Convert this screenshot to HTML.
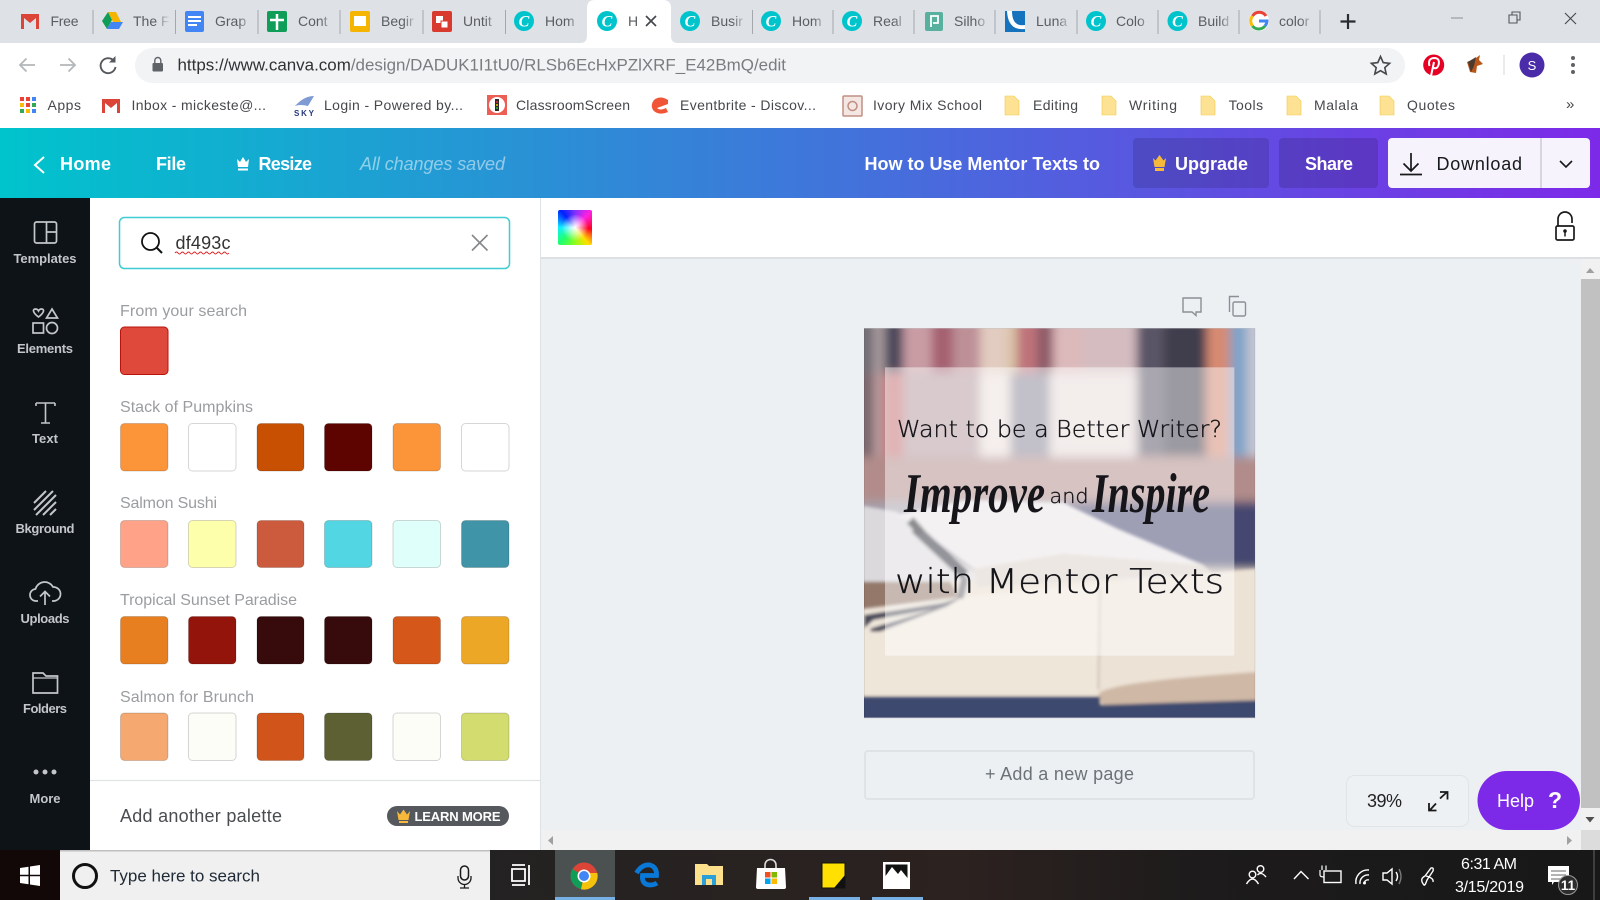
<!DOCTYPE html>
<html lang="en">
<head>
<meta charset="utf-8">
<title>How to Use Mentor Texts to - Canva</title>
<style>
html,body{margin:0;padding:0;width:1600px;height:900px;overflow:hidden;background:#fff}
svg{display:block;position:absolute;left:0;top:0}
text{font-family:"Liberation Sans",sans-serif}
.tab{font-size:14px;fill:#5a5d61}
.bm{font-size:14px;fill:#45484c}
.c{font-family:"Liberation Serif",serif;font-style:italic;font-weight:700;font-size:16px;fill:#fff;text-anchor:middle}
.top{font-size:18px;font-weight:700;fill:#fff}
.side{font-size:13px;font-weight:700;fill:#c4c7c9}
.lab{font-size:16px;fill:#9a9da0}
.sw{stroke:rgba(0,0,0,.16);stroke-width:1}
.ic{fill:none;stroke:#c4c7c9;stroke-width:1.7}
.sep{stroke:#a4a7ab;stroke-width:1}
text.mont{font-family:"DejaVu Sans Light","DejaVu Sans",sans-serif;fill:#141418;stroke:#141418;stroke-width:.35px}
text.script{font-family:"Liberation Serif",serif;font-style:italic;font-weight:700;font-size:56px;fill:#15151a}
</style>
</head>
<body>
<svg width="1600" height="900" viewBox="0 0 1600 900" xmlns="http://www.w3.org/2000/svg">
<defs>
<linearGradient id="bar" x1="0" x2="1" y1="0" y2="0"><stop offset="0" stop-color="#00c4cc"/><stop offset="1" stop-color="#7d2ae8"/></linearGradient>
<linearGradient id="tb" x1="0" x2="1" y1="0" y2="0"><stop offset="0" stop-color="#1a2123"/><stop offset=".6" stop-color="#2c2220"/><stop offset=".75" stop-color="#1d1b1b"/><stop offset="1" stop-color="#181818"/></linearGradient>
<linearGradient id="fade" x1="0" x2="1" y1="0" y2="0"><stop offset="0" stop-color="#dee1e6" stop-opacity="0"/><stop offset=".75" stop-color="#dee1e6"/></linearGradient>
<filter id="b1" x="-5%" y="-5%" width="110%" height="110%"><feGaussianBlur stdDeviation="14"/></filter>
<filter id="b2" x="-20%" y="-20%" width="140%" height="140%"><feGaussianBlur stdDeviation="5"/></filter>
<clipPath id="imgclip"><rect x="42" y="25" width="1173" height="1168"/></clipPath>
</defs>

<!-- Chrome tab strip -->
<g>
<rect width="1600" height="43" fill="#dee1e6"/>
<path d="M580 43 Q587 43 587 36 V8 Q587 0 595 0 H663 Q671 0 671 8 V36 Q671 43 678 43 Z" fill="#fff"/>
<!-- tab icons -->
<path d="M21 14 H39 V29 H36 V18 L30 23 L24 18 V29 H21 Z" fill="#db4437"/>
<path d="M108 12 H116 L122 24 H114 Z" fill="#f4b400"/><path d="M108 12 L112 20 L107 29 L102 21 Z" fill="#0f9d58"/><path d="M107 29 L111 22 H123 L119 29 Z" fill="#4285f4"/>
<rect x="185" y="11" width="19" height="21" rx="2" fill="#4285f4"/><path d="M188 17 H201 M188 21 H201 M188 25 H197" stroke="#fff" stroke-width="2"/>
<rect x="267" y="11" width="20" height="21" rx="2" fill="#0f9d58"/><path d="M277 14 V30 M270 20 H284" stroke="#fff" stroke-width="2.5"/>
<rect x="350" y="11" width="20" height="21" rx="2" fill="#f4b400"/><rect x="354" y="16" width="12" height="10" fill="#fff"/>
<rect x="432" y="11" width="20" height="21" rx="2" fill="#d83b2e"/><rect x="436" y="16" width="7" height="7" fill="#fff"/><rect x="441" y="21" width="7" height="7" fill="#fff" stroke="#d83b2e"/>
<circle cx="524" cy="21" r="10" fill="#00c4cc"/><text x="524" y="26.5" class="c">C</text>
<circle cx="607" cy="21" r="10" fill="#00c4cc"/><text x="607" y="26.5" class="c">C</text>
<circle cx="690" cy="21" r="10" fill="#00c4cc"/><text x="690" y="26.5" class="c">C</text>
<circle cx="771" cy="21" r="10" fill="#00c4cc"/><text x="771" y="26.5" class="c">C</text>
<circle cx="852" cy="21" r="10" fill="#00c4cc"/><text x="852" y="26.5" class="c">C</text>
<rect x="925" y="12" width="18" height="19" rx="2" fill="#58b09f"/><path d="M931 27 V16 H938 V23 H933" fill="none" stroke="#fff" stroke-width="1.8"/>
<rect x="1005" y="11" width="20" height="21" fill="#1573bd"/><path d="M1012 11 Q1012 27 1025 25 V29 Q1008 31 1007 11 Z" fill="#fff"/>
<circle cx="1096" cy="21" r="10" fill="#00c4cc"/><text x="1096" y="26.5" class="c">C</text>
<circle cx="1177.5" cy="21" r="10" fill="#00c4cc"/><text x="1177.5" y="26.5" class="c">C</text>
<circle cx="1259" cy="21" r="10" fill="#fff"/>
<path d="M1266 16 A8 8 0 0 0 1252.5 16" fill="none" stroke="#ea4335" stroke-width="3"/><path d="M1252.5 16 A8 8 0 0 0 1252.5 26" fill="none" stroke="#fbbc05" stroke-width="3"/><path d="M1252.5 26 A8 8 0 0 0 1265 26" fill="none" stroke="#34a853" stroke-width="3"/><path d="M1265 26 A8 8 0 0 0 1267 21 H1259" fill="none" stroke="#4285f4" stroke-width="3"/>
<!-- tab labels -->
<g class="tab">
<text x="50.5" y="26" textLength="28">Free</text>
<text x="133" y="26">The F</text>
<text x="215" y="26">Grap</text>
<text x="298" y="26">Cont</text>
<text x="381" y="26">Begir</text>
<text x="463" y="26">Untit</text>
<text x="545" y="26">Hom</text>
<text x="628" y="26">H</text>
<text x="711" y="26">Busir</text>
<text x="792" y="26">Hom</text>
<text x="873" y="26">Real</text>
<text x="954" y="26">Silho</text>
<text x="1036" y="26">Luna</text>
<text x="1116" y="26">Colo</text>
<text x="1198" y="26">Build</text>
<text x="1279" y="26">color</text>
</g>
<g fill="url(#fade)">
<rect x="155" y="8" width="20" height="28"/><rect x="238" y="8" width="20" height="28"/><rect x="320" y="8" width="20" height="28"/><rect x="403" y="8" width="20" height="28"/><rect x="485" y="8" width="20" height="28"/><rect x="567" y="8" width="20" height="28"/><rect x="732" y="8" width="20" height="28"/><rect x="813" y="8" width="20" height="28"/><rect x="894" y="8" width="20" height="28"/><rect x="975" y="8" width="20" height="28"/><rect x="1057" y="8" width="20" height="28"/><rect x="1138" y="8" width="20" height="28"/><rect x="1219" y="8" width="20" height="28"/><rect x="1300" y="8" width="20" height="28"/>
</g>
<g class="sep"><line x1="93" y1="10" x2="93" y2="34"/><line x1="175.5" y1="10" x2="175.5" y2="34"/><line x1="258" y1="10" x2="258" y2="34"/><line x1="340" y1="10" x2="340" y2="34"/><line x1="423" y1="10" x2="423" y2="34"/><line x1="505.5" y1="10" x2="505.5" y2="34"/><line x1="752.5" y1="10" x2="752.5" y2="34"/><line x1="833" y1="10" x2="833" y2="34"/><line x1="914" y1="10" x2="914" y2="34"/><line x1="995" y1="10" x2="995" y2="34"/><line x1="1077" y1="10" x2="1077" y2="34"/><line x1="1158" y1="10" x2="1158" y2="34"/><line x1="1239" y1="10" x2="1239" y2="34"/><line x1="1320" y1="10" x2="1320" y2="34"/></g>
<path d="M646 16 L656 26 M656 16 L646 26" stroke="#45484c" stroke-width="1.7"/>
<path d="M1348 14 V29 M1340.5 21.5 H1355.5" stroke="#2a2c2f" stroke-width="2.2"/>
<path d="M1451 18 H1463" stroke="#9a9da0" stroke-width="1.2"/>
<path d="M1509 15 H1517 V23 H1509 Z M1512 15 V12 H1520 V20 H1517" fill="none" stroke="#55585c" stroke-width="1.1"/>
<path d="M1565 13 L1576 24 M1576 13 L1565 24" stroke="#44474a" stroke-width="1.1"/>
</g>

<!-- Chrome toolbar -->
<g>
<rect y="43" width="1600" height="85" fill="#fff"/>
<rect x="135" y="48" width="1270" height="35" rx="17.5" fill="#f1f3f4"/>
<path d="M35 65 H20 M26.5 58.5 L20 65 L26.5 71.5" fill="none" stroke="#b4b7ba" stroke-width="1.8"/>
<path d="M60 65 H75 M68.5 58.5 L75 65 L68.5 71.5" fill="none" stroke="#b4b7ba" stroke-width="1.8"/>
<path d="M114 61 A7.5 7.5 0 1 0 115.5 67" fill="none" stroke="#55585c" stroke-width="1.9"/><path d="M115.5 56 V62.5 H109 Z" fill="#55585c"/>
<rect x="152.5" y="63" width="10.5" height="8.5" rx="1" fill="#5f6368"/><path d="M154.8 63 V60.5 A3 3 0 0 1 160.8 60.5 V63" fill="none" stroke="#5f6368" stroke-width="1.4"/>
<text x="177.5" y="70.5" font-size="17" fill="#7a7d80" textLength="608.5" lengthAdjust="spacingAndGlyphs"><tspan fill="#2f3134">https://www.canva.com</tspan>/design/DADUK1I1tU0/RLSb6EcHxPZlXRF_E42BmQ/edit</text>
<path d="M1380.5 56.5 L1383.2 62.6 L1389.6 63.3 L1384.8 67.6 L1386.2 74 L1380.5 70.7 L1374.8 74 L1376.2 67.6 L1371.4 63.3 L1377.8 62.6 Z" fill="none" stroke="#45484c" stroke-width="1.6"/>
<circle cx="1433.7" cy="65" r="10.5" fill="#e60023"/><path d="M1431 76 L1434 62 M1429.5 66 Q1427.5 58.5 1434 58 Q1440 58 1438.7 64.5 Q1437 70 1433 67.5" fill="none" stroke="#fff" stroke-width="2"/>
<path d="M1470 72 L1467 62 L1476 58 L1480 55 L1479 60 L1483 64 L1477 66 L1476 73 Z" fill="#b8571a"/><path d="M1468 62 L1476 57 L1474 66 L1471 72 Z" fill="#4a3a30"/>
<line x1="1504" y1="55" x2="1504" y2="75" stroke="#d5d7da"/>
<circle cx="1532" cy="65" r="12.5" fill="#4a2ba8"/><text x="1532" y="70" font-size="13" fill="#fff" text-anchor="middle">S</text>
<circle cx="1573" cy="58" r="2" fill="#5f6368"/><circle cx="1573" cy="65" r="2" fill="#5f6368"/><circle cx="1573" cy="72" r="2" fill="#5f6368"/>
<!-- bookmarks -->
<g>
<g fill="#ea4335"><rect x="20" y="97" width="4" height="4"/><rect x="26" y="97" width="4" height="4"/></g><rect x="32" y="97" width="4" height="4" fill="#4285f4"/>
<g fill="#fbbc05"><rect x="20" y="103" width="4" height="4"/></g><rect x="26" y="103" width="4" height="4" fill="#ea4335"/><rect x="32" y="103" width="4" height="4" fill="#34a853"/>
<rect x="20" y="109" width="4" height="4" fill="#34a853"/><rect x="26" y="109" width="4" height="4" fill="#fbbc05"/><rect x="32" y="109" width="4" height="4" fill="#4285f4"/>
<path d="M102 99 H120 V113 H117 V103 L111 108 L105 103 V113 H102 Z" fill="#db4437"/>
<path d="M295 106 Q304 96 314 96 L308 106 Q300 104 295 106 Z" fill="#7f9bd4"/><text x="294" y="116" font-size="8" font-weight="700" fill="#24397a" textLength="20">SKY</text>
<rect x="487" y="95" width="20" height="20" fill="#ed5f55"/><circle cx="497" cy="105" r="8" fill="#fff"/><rect x="495" y="99" width="4" height="12" fill="#2b2b2b"/><circle cx="497" cy="102" r="1" fill="#e33"/><circle cx="497" cy="105" r="1" fill="#ec0"/><circle cx="497" cy="108" r="1" fill="#3b3"/>
<path d="M668 100 Q660 95 654 100 Q650 105 653 110 Q658 116 668 112 L666 108 Q660 111 657 108 L668 104 Z" fill="#f05537"/>
<rect x="843" y="96" width="19" height="20" rx="1" fill="#f4e6e2" stroke="#c08f82" stroke-width="1.5"/><circle cx="852.5" cy="106" r="4.5" fill="none" stroke="#c08f82" stroke-width="1.5"/>
<g fill="#fde293" stroke="#f2c94c" stroke-width=".6">
<path d="M1005 96 H1014 L1019 101 V115 H1005 Z"/><path d="M1102 96 H1111 L1116 101 V115 H1102 Z"/><path d="M1201 96 H1210 L1215 101 V115 H1201 Z"/><path d="M1287 96 H1296 L1301 101 V115 H1287 Z"/><path d="M1380 96 H1389 L1394 101 V115 H1380 Z"/>
</g>
<g class="bm">
<text x="47.5" y="110" textLength="33.5">Apps</text>
<text x="131.5" y="110" textLength="134.5">Inbox - mickeste@...</text>
<text x="324" y="110" textLength="139">Login - Powered by...</text>
<text x="516" y="110" textLength="114">ClassroomScreen</text>
<text x="680" y="110" textLength="136">Eventbrite - Discov...</text>
<text x="873" y="110" textLength="109">Ivory Mix School</text>
<text x="1033" y="110" textLength="45">Editing</text>
<text x="1129" y="110" textLength="48">Writing</text>
<text x="1228.6" y="110" textLength="34.5">Tools</text>
<text x="1314" y="110" textLength="44">Malala</text>
<text x="1407" y="110" textLength="48">Quotes</text>
<text x="1566" y="109" font-size="15">»</text>
</g>
</g>
</g>

<!-- Canva top bar -->
<g>
<rect y="128" width="1600" height="70" fill="url(#bar)"/>
<path d="M44 157 L35 165 L44 173" fill="none" stroke="#fff" stroke-width="2"/>
<text x="60" y="170" class="top" textLength="51">Home</text>
<text x="156" y="170" class="top" textLength="30">File</text>
<path d="M237 159 L240 162 L243 157 L246 162 L249 159 L248 167 H238 Z M238 168.5 H248 V170.5 H238 Z" fill="#fff"/>
<text x="258.5" y="170" class="top" textLength="53.5">Resize</text>
<text x="360" y="170" font-size="18" font-style="italic" fill="#fff" fill-opacity=".5" textLength="145">All changes saved</text>
<text x="864.5" y="170" class="top" textLength="235.5">How to Use Mentor Texts to</text>
<rect x="1133" y="138" width="136" height="50" rx="4" fill="#000" fill-opacity=".13"/>
<path d="M1153 158 L1155.5 160.5 L1159.5 155 L1163.5 160.5 L1166 158 L1164.5 167 H1154.5 Z M1155 168 H1164 V171 H1155 Z" fill="#f6b93b"/>
<text x="1175" y="170" class="top" textLength="73">Upgrade</text>
<rect x="1279" y="138" width="99" height="50" rx="4" fill="#000" fill-opacity=".14"/>
<text x="1305" y="170" class="top" textLength="48">Share</text>
<rect x="1388" y="138" width="202" height="50" rx="4" fill="#f6f3fd"/>
<line x1="1541" y1="138" x2="1541" y2="188" stroke="#b9b6c4"/>
<path d="M1411 153 V171 M1403.5 163.5 L1411 171 L1418.5 163.5" fill="none" stroke="#16181a" stroke-width="1.7"/><path d="M1400 174.5 H1422" stroke="#16181a" stroke-width="1.8"/>
<text x="1436.5" y="170" font-size="18" fill="#16181a" textLength="85.5">Download</text>
<path d="M1560 161 L1566 167 L1572 161" fill="none" stroke="#16181a" stroke-width="1.6"/>
</g>

<!-- Sidebar -->
<g>
<rect y="198" width="90" height="652" fill="#0e1318"/>
<g class="ic">
<rect x="34.5" y="222" width="22" height="21" rx="2"/><path d="M46.5 222 V243 M46.5 232 H56.5"/>
<path d="M38.5 317 C33 313 32 309 35.5 309 Q37.5 309 38.5 311 Q39.5 309 41.5 309 C45 309 44 313 38.5 317 Z"/><path d="M52 309 L57.5 318 H46.5 Z"/><rect x="33" y="323" width="10.5" height="10"/><circle cx="52" cy="328" r="5.5"/>
<path d="M36 403 H55 M45.5 403 V423 M41 423 H50 M36 403 V406 M55 403 V406" stroke-width="1.6"/>
<path d="M34 503 L46 491 M34 510 L53 491 M36 515 L56 495 M43 515 L56 502 M50 515 L56 509" stroke-width="2"/>
<path d="M38 601 H36.5 A6 6 0 0 1 35.5 589 A9.5 9.5 0 0 1 53 587 A7 7 0 0 1 54 601 H52"/><path d="M45 605 V592 M40 596.5 L45 591.5 L50 596.5"/>
<path d="M33 693 V673 H43 L46 676 H57.5 V693 Z"/><path d="M33 678 H57.5" stroke-width="1.2"/>
</g>
<circle cx="36" cy="772" r="2.5" fill="#c4c7c9"/><circle cx="45" cy="772" r="2.5" fill="#c4c7c9"/><circle cx="54" cy="772" r="2.5" fill="#c4c7c9"/>
<g class="side" text-anchor="middle">
<text x="45" y="263" textLength="63">Templates</text>
<text x="45" y="353" textLength="56">Elements</text>
<text x="45" y="443" textLength="26">Text</text>
<text x="45" y="533" textLength="59">Bkground</text>
<text x="45" y="623" textLength="49">Uploads</text>
<text x="45" y="713" textLength="44">Folders</text>
<text x="45" y="803" textLength="31">More</text>
</g>
</g>

<!-- Colour panel -->
<g>
<rect x="90" y="198" width="450" height="652" fill="#fff"/>
<rect x="119.5" y="217.5" width="390" height="51" rx="5" fill="#fff" stroke="#3fcdd5" stroke-width="1.5"/>
<circle cx="150.5" cy="241.5" r="8.5" fill="none" stroke="#111" stroke-width="1.8"/><path d="M156.5 247.5 L162 253" stroke="#111" stroke-width="2"/>
<text x="175.5" y="249" font-size="18" fill="#333" textLength="55">df493c</text>
<path d="M175 253 q1.5 -2 3 0 t3 0 t3 0 t3 0 t3 0 t3 0 t3 0 t3 0 t3 0 t3 0 t3 0 t3 0 t3 0 t3 0 t3 0 t3 0 t3 0 t3 0" fill="none" stroke="#e02020" stroke-width="1"/>
<path d="M472 235 L487.5 250.5 M487.5 235 L472 250.5" stroke="#85888b" stroke-width="1.6"/>

<g class="lab">
<text x="120" y="316" textLength="127">From your search</text>
<text x="120" y="412" textLength="133">Stack of Pumpkins</text>
<text x="120" y="508" textLength="97">Salmon Sushi</text>
<text x="120" y="605" textLength="177">Tropical Sunset Paradise</text>
<text x="120" y="702" textLength="134">Salmon for Brunch</text>
</g>
<rect class="sw" x="120.5" y="327" width="47.5" height="47.5" rx="4" fill="#df493c" style="stroke:#b8140c"/>
<g class="sw">
<rect x="120.5" y="423.5" width="47.5" height="47.5" rx="4" fill="#fc943a"/><rect x="188.5" y="423.5" width="47.5" height="47.5" rx="4" fill="#fff"/><rect x="257" y="423.5" width="47" height="47.5" rx="4" fill="#c75003"/><rect x="324.5" y="423.5" width="47.5" height="47.5" rx="4" fill="#5d0300"/><rect x="393" y="423.5" width="47.5" height="47.5" rx="4" fill="#fc943a"/><rect x="461.5" y="423.5" width="47.5" height="47.5" rx="4" fill="#fff"/>
<rect x="120.5" y="520.5" width="47.5" height="47" rx="4" fill="#ffa288"/><rect x="188.5" y="520.5" width="47.5" height="47" rx="4" fill="#feffaa"/><rect x="257" y="520.5" width="47" height="47" rx="4" fill="#cc5b3d"/><rect x="324.5" y="520.5" width="47.5" height="47" rx="4" fill="#53d6e3"/><rect x="393" y="520.5" width="47.5" height="47" rx="4" fill="#dffffb"/><rect x="461.5" y="520.5" width="47.5" height="47" rx="4" fill="#4094a8"/>
<rect x="120.5" y="616.5" width="47.5" height="47.5" rx="4" fill="#e77f21"/><rect x="188.5" y="616.5" width="47.5" height="47.5" rx="4" fill="#93140b"/><rect x="257" y="616.5" width="47" height="47.5" rx="4" fill="#370a0c"/><rect x="324.5" y="616.5" width="47.5" height="47.5" rx="4" fill="#370a0c"/><rect x="393" y="616.5" width="47.5" height="47.5" rx="4" fill="#d5581a"/><rect x="461.5" y="616.5" width="47.5" height="47.5" rx="4" fill="#eda727"/>
<rect x="120.5" y="713" width="47.5" height="47.5" rx="4" fill="#f5a971"/><rect x="188.5" y="713" width="47.5" height="47.5" rx="4" fill="#fdfdf8"/><rect x="257" y="713" width="47" height="47.5" rx="4" fill="#d1541b"/><rect x="324.5" y="713" width="47.5" height="47.5" rx="4" fill="#5c6033"/><rect x="393" y="713" width="47.5" height="47.5" rx="4" fill="#fdfdf8"/><rect x="461.5" y="713" width="47.5" height="47.5" rx="4" fill="#d3dc6e"/>
</g>
<line x1="90" y1="780.5" x2="540" y2="780.5" stroke="#e0e2e4" stroke-width="1.2"/>
<text x="120" y="822" font-size="18" fill="#4a4d50" textLength="162">Add another palette</text>
<rect x="387" y="806" width="122" height="20" rx="10" fill="#55585c"/>
<path d="M397 811 L400 814.5 L403.5 809.5 L407 814.5 L410 811 L408.5 820 H398.5 Z M399 821 H408 V823 H399 Z" fill="#f6b93b"/>
<text x="414.5" y="821" font-size="13" font-weight="700" fill="#fff" textLength="86">LEARN MORE</text>
</g>

<!-- Editor area -->
<g>
<rect x="540" y="198" width="1060" height="60" fill="#fff"/>
<line x1="540.5" y1="198" x2="540.5" y2="850" stroke="#dfe2e5"/>
<rect x="541" y="257" width="1059" height="2" fill="#dde0e3"/>
<rect x="541" y="259" width="1040" height="571" fill="#edf0f3"/>
<foreignObject x="558" y="210" width="34" height="35"><div xmlns="http://www.w3.org/1999/xhtml" style="width:34px;height:35px;border-radius:2px;background:radial-gradient(circle at 50% 50%,#fff 0,rgba(255,255,255,.7) 18%,rgba(255,255,255,0) 55%),conic-gradient(from 0deg,#8030ff,#ff20e0 45deg,#ff0020 95deg,#ffe000 140deg,#80ff20 185deg,#20ff70 225deg,#10f0ff 270deg,#0020ff 320deg,#8030ff)"></div></foreignObject>
<path d="M1558 226 V219 A7 7 0 0 1 1572 219 V223" fill="none" stroke="#1a1a1a" stroke-width="1.7"/>
<rect x="1556" y="226" width="18" height="14" rx="1.5" fill="#fff" stroke="#1a1a1a" stroke-width="1.7"/><circle cx="1565" cy="231" r="1.8" fill="#1a1a1a"/><path d="M1565 232 V236.5" stroke="#1a1a1a" stroke-width="1.5"/>
<path d="M1183 298 H1201 V312 H1196 V315.5 L1192 312 H1183 Z" fill="none" stroke="#8b9094" stroke-width="1.4"/>
<path d="M1229.5 312 V296.5 H1239" fill="none" stroke="#8b9094" stroke-width="1.4"/><rect x="1233" y="302" width="12.5" height="14" rx="1.5" fill="none" stroke="#8b9094" stroke-width="1.4"/>

<!-- Design: photo approximated with blurred shapes -->
<g transform="translate(850 320) scale(.33333)" clip-path="url(#imgclip)">
<g filter="url(#b1)">
<rect x="20" y="10" width="1220" height="1200" fill="#e8dccd"/>
<!-- book spines, upper part -->
<rect x="20" y="0" width="50" height="160" fill="#6e6a72"/><rect x="70" y="0" width="35" height="160" fill="#a79a9c"/><rect x="105" y="0" width="55" height="160" fill="#4a465a"/><rect x="160" y="0" width="85" height="160" fill="#c99ca4"/><rect x="245" y="0" width="65" height="160" fill="#a5616f"/><rect x="310" y="0" width="80" height="160" fill="#bd9097"/><rect x="390" y="0" width="80" height="160" fill="#e2cbc0"/><rect x="470" y="0" width="30" height="160" fill="#d9c4a8"/><rect x="500" y="0" width="60" height="160" fill="#bf737a"/><rect x="560" y="0" width="50" height="160" fill="#8e5a68"/><rect x="610" y="0" width="90" height="160" fill="#dcb9bb"/><rect x="700" y="0" width="160" height="160" fill="#d4bcc0"/>
<rect x="860" y="0" width="80" height="420" fill="#5a5566"/><rect x="940" y="0" width="130" height="420" fill="#403c4e"/><rect x="1070" y="0" width="70" height="420" fill="#d68a72"/><rect x="1140" y="0" width="50" height="420" fill="#7ea3c9"/><rect x="1190" y="0" width="60" height="420" fill="#c3c4d0"/>
<!-- book spines, lower part -->
<rect x="20" y="160" width="50" height="260" fill="#77646a"/><rect x="70" y="160" width="35" height="260" fill="#b89a9c"/><rect x="105" y="160" width="55" height="260" fill="#c66c70"/><rect x="160" y="160" width="230" height="260" fill="#b49aa0"/><rect x="390" y="160" width="90" height="260" fill="#ece0dc"/><rect x="480" y="160" width="120" height="260" fill="#8a8698"/><rect x="600" y="160" width="260" height="260" fill="#e8dcda"/>
<!-- table -->
<rect x="20" y="410" width="1220" height="135" fill="#b18c8a"/>
<rect x="620" y="545" width="620" height="205" fill="#444670"/>
<rect x="20" y="545" width="620" height="205" fill="#a5a0ac"/>
</g>
<g filter="url(#b2)">
<path d="M20 555 L140 575 L400 780 L20 790 Z" fill="#dcd9dd"/>
<path d="M140 585 L350 540 L640 548 L800 625 L1060 735 L1085 760 L850 780 L400 770 L370 745 L190 610 Z" fill="#e9e5e7"/>
<path d="M375 745 L640 700 L1060 735 L1085 762 L380 800 Z" fill="#dcd1c9"/>
<path d="M20 785 H300 L340 860 L20 870 Z" fill="#94796a"/>
<path d="M20 870 L340 830 L750 790 V1125 H20 Z" fill="#efe6da"/>
<path d="M750 790 L1240 745 V1110 H750 Z" fill="#ece2d6"/>
<path d="M745 1125 Q760 1085 1240 1055 V1145 L760 1160 Z" fill="#cfb8a5"/>
<rect x="20" y="1130" width="730" height="90" fill="#3e4a6e"/>
<path d="M745 1155 L1240 1140 V1210 H745 Z" fill="#3e4a6e"/>
<path d="M42 885 L280 848 L340 830 L290 860 L90 935 L62 935 L62 925 L250 868 L70 900 L42 925 Z" fill="#4a4a5a"/>
<path d="M195 625 L345 765" stroke="#33333f" stroke-width="32"/>
<path d="M180 600 L215 640" stroke="#26262f" stroke-width="28"/>
<path d="M345 770 L330 835" stroke="#6a6870" stroke-width="20"/>
<path d="M750 800 L745 1110" stroke="#c5b8aa" stroke-width="5"/>
</g>
<rect x="105" y="142" width="1048" height="865" fill="#fff" fill-opacity=".48"/>
</g>
<rect x="864.5" y="328.5" width="390.5" height="389.5" fill="none" stroke="#000" stroke-opacity=".08"/>
<text x="897" y="437" class="mont" font-size="23" textLength="325" lengthAdjust="spacingAndGlyphs">Want to be a Better Writer?</text>
<text x="904" y="512" class="script" textLength="141" lengthAdjust="spacingAndGlyphs">Improve</text>
<text x="1049.5" y="503" class="mont" font-size="20" textLength="39" lengthAdjust="spacingAndGlyphs">and</text>
<text x="1092" y="512" class="script" textLength="118" lengthAdjust="spacingAndGlyphs">Inspire</text>
<text x="895" y="593" class="mont" font-size="34" textLength="329" lengthAdjust="spacingAndGlyphs">with Mentor Texts</text>

<rect x="865" y="751" width="389" height="48" rx="3" fill="none" stroke="#dfe3e6" stroke-width="2"/>
<text x="985" y="780" font-size="18" fill="#6b7378" textLength="149">+ Add a new page</text>

<rect x="1346.5" y="775.5" width="122" height="51" rx="8" fill="#eef1f3" stroke="#e0e4e7"/>
<text x="1367" y="807" font-size="18" fill="#222" textLength="35">39%</text>
<path d="M1430 810 L1436 803.5 M1429 803 V810.5 H1436.5 M1440 798.5 L1446.5 792.5 M1440 792 H1447.5 V799.5" fill="none" stroke="#1a1a1a" stroke-width="1.8"/>
<rect x="1477.5" y="771" width="102.5" height="59" rx="29.5" fill="#7d2ae8"/>
<text x="1497" y="807" font-size="18" fill="#fff" textLength="37">Help</text>
<text x="1548" y="808" font-size="23" font-weight="700" fill="#fff">?</text>

<!-- Scrollbars -->
<rect x="1581" y="259" width="19" height="591" fill="#f1f1f1"/>
<rect x="1581" y="279" width="19" height="529" fill="#c1c1c1"/>
<path d="M1586 273 L1590 268 L1594.5 273 Z" fill="#a0a0a0"/>
<path d="M1585.5 817 L1590 822.5 L1594.5 817 Z" fill="#505050"/>
<rect x="541" y="830" width="1040" height="20" fill="#f1f1f1"/>
<rect x="1581" y="830" width="19" height="20" fill="#dcdcdc"/>
<path d="M548 836 L553 840.5 L548 845 Z" transform="rotate(180 550.5 840.5)" fill="#a0a0a0"/>
<path d="M1567 836 L1572 840.5 L1567 845 Z" fill="#a0a0a0"/>
</g>

<!-- Windows taskbar -->
<g>
<rect y="850" width="1600" height="50" fill="url(#tb)"/>
<rect y="850" width="60" height="50" fill="#130808"/>
<path d="M20 868 L28.5 866.7 V874.7 H20 Z M30 866.5 L40 865 V874.7 H30 Z M20 876.3 H28.5 V884.3 L20 883 Z M30 876.3 H40 V886 L30 884.5 Z" fill="#fff"/>
<rect x="60" y="850" width="430" height="50" fill="#f0f0f0"/>
<rect x="60" y="850" width="430" height="1.5" fill="#bfbfbf"/>
<circle cx="85" cy="876" r="11.5" fill="none" stroke="#111" stroke-width="3"/>
<text x="110" y="881.5" font-size="17" fill="#1f2a36" textLength="150">Type here to search</text>
<rect x="460.5" y="866" width="8" height="14" rx="4" fill="none" stroke="#1a1a1a" stroke-width="1.5"/><path d="M458 876 V878 A6.5 6.5 0 0 0 471 878 V876 M464.5 884.5 V888 M460 888 H469" fill="none" stroke="#1a1a1a" stroke-width="1.3"/>
<path d="M512 869 H525 V881 H512 Z M512 865 H525 M512 885 H525 M529 865 V885" fill="none" stroke="#fff" stroke-width="1.8"/>
<rect x="555" y="850" width="60" height="50" fill="#4b5151"/>
<rect x="555" y="897" width="60" height="3" fill="#76b0e4"/>
<rect x="809" y="897" width="51" height="3" fill="#76b0e4"/>
<rect x="872" y="897" width="51" height="3" fill="#76b0e4"/>
<circle cx="584" cy="876" r="13.5" fill="#db4437"/>
<path d="M584 876 L572.3 869 A13.5 13.5 0 0 0 581 889 Z" fill="#0f9d58"/>
<path d="M584 876 L581 889.2 A13.5 13.5 0 0 0 597.3 873 H584 Z" fill="#f4c20d"/>
<circle cx="584" cy="876" r="6.5" fill="#fff"/><circle cx="584" cy="876" r="5" fill="#4285f4"/>
<!-- edge -->
<path d="M636.5 873 Q642 864 650 865 Q657 867 656.5 875.5 H642.5 Q641.5 884.5 650 885 Q654 885 657 883" fill="none" stroke="#0a78d7" stroke-width="4.8"/>
<!-- explorer -->
<path d="M695 864 H707 L709 866 H723 V885 H695 Z" fill="#fde08b"/><path d="M702 885 V875 H716 V885 H712 V879 H706 V885 Z" fill="#2a9fd8"/>
<!-- store -->
<path d="M765 869 V865 A5.5 5.5 0 0 1 776 865 V869" fill="none" stroke="#ddd" stroke-width="1.6"/>
<path d="M757 868 H785 L786 887 A2 2 0 0 1 784 889 H758 A2 2 0 0 1 756 887 Z" fill="#fff"/>
<rect x="765" y="872" width="5.5" height="5.5" fill="#f25022"/><rect x="771.5" y="872" width="5.5" height="5.5" fill="#7fba00"/><rect x="765" y="878.5" width="5.5" height="5.5" fill="#00a4ef"/><rect x="771.5" y="878.5" width="5.5" height="5.5" fill="#ffb900"/>
<!-- sticky -->
<rect x="822" y="863" width="23" height="25" fill="#ffe000" stroke="#111"/><path d="M845 875 L834 888 H845 Z" fill="#111"/>
<!-- photos -->
<rect x="883" y="862" width="27" height="27" fill="#fff"/><path d="M885.5 864.5 H907.5 V878 L901 870 L898 874 L892 867 L885.5 876 Z" fill="#111"/>
<!-- tray -->
<g fill="none" stroke="#fff" stroke-width="1.4">
<circle cx="1260.5" cy="869" r="3.3"/><circle cx="1252.5" cy="874.5" r="3.3"/><path d="M1246.5 884 Q1252.5 874 1258.5 884 M1257.5 875 Q1261 871 1266 877"/>
<path d="M1294 879 L1301 871.5 L1308.5 879"/>
<rect x="1324" y="871" width="17" height="11.5"/><path d="M1320 870 V875 Q1320 877 1324 877 M1322 865.5 V870 M1326 865.5 V870" stroke-width="1.2"/>
<path d="M1356 884 A12 12 0 0 1 1369 870 M1360 884 A8 8 0 0 1 1369 875 M1364 884 A4 4 0 0 1 1369 880"/>
<path d="M1383 873 H1387 L1392 869 V884 L1387 880 H1383 Z M1396 872 Q1399 876.5 1396 881"/><path d="M1399 869 Q1403 876.5 1399 884" stroke="#777"/>
<path d="M1424 885 Q1419 879 1425 876 L1431 868 Q1434 867 1433 871 L1427 880 Q1425 886 1424 885 Z M1426 876 Q1434 878 1433 882"/>
</g>
<circle cx="1364.5" cy="883" r="1.5" fill="#fff"/>
<text x="1489" y="869" font-size="16" fill="#fff" text-anchor="middle" textLength="56">6:31 AM</text>
<text x="1489.5" y="892" font-size="16" fill="#fff" text-anchor="middle" textLength="69">3/15/2019</text>
<path d="M1548 866 H1569 V882 H1554 L1552 885 V882 H1548 Z" fill="#fff"/><path d="M1551 871 H1566 M1551 875 H1566 M1551 879 H1562" stroke="#888" stroke-width="1.2"/>
<circle cx="1568" cy="885" r="9.5" fill="#2d2d2d" stroke="#999"/><text x="1568" y="890" font-size="13.5" font-weight="700" fill="#fff" text-anchor="middle">11</text>
<line x1="1594" y1="850" x2="1594" y2="900" stroke="#666"/>
</g>
</svg>
</body>
</html>
